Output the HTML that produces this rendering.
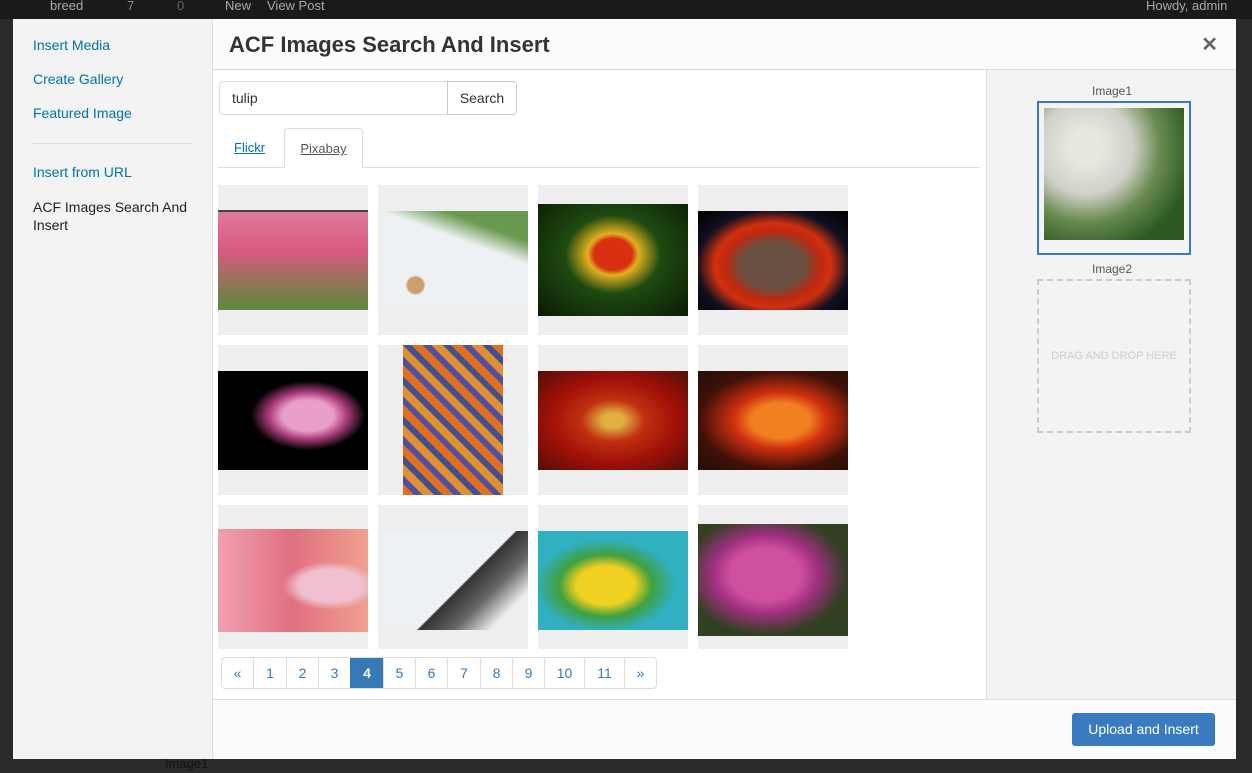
<!DOCTYPE html><html><head><style>
*{box-sizing:border-box;margin:0;padding:0}
body{width:1252px;height:773px;background:#2b2b2b;font-family:"Liberation Sans",sans-serif;position:relative;overflow:hidden}
.bar{position:absolute;left:0;top:0;width:1252px;height:19px;background:#1a1a1a;color:#888;font-size:13px}
.bar span{position:absolute;top:-2px}
.modal{position:absolute;left:13px;top:19px;width:1223px;height:740px;background:#fff}
.side{position:absolute;left:0;top:0;width:200px;height:740px;background:#f3f3f3;border-right:1px solid #ddd}
.side a{position:absolute;left:20px;color:#0073aa;font-size:14px;text-decoration:none}
.hdr{position:absolute;left:200px;top:0;right:0;height:51px;border-bottom:1px solid #ddd;background:#fcfcfc}
.hdr h1{position:absolute;left:16px;top:13px;font-size:22px;color:#333;font-weight:bold}
.right{position:absolute;left:973px;top:51px;right:0;height:629px;background:#f3f3f3;border-left:1px solid #ddd}
.foot{position:absolute;left:200px;top:680px;right:0;height:60px;background:#fcfcfc;border-top:1px solid #ddd}
.cell{position:absolute;width:150px;background:#eee}
.im{position:absolute}
.pg{position:absolute;left:221px;top:657px;height:32px;border:1px solid #ddd;border-radius:4px;display:flex;background:#fff}
.pg div{height:30px;line-height:30px;text-align:center;color:#337ab7;font-size:14px;border-left:1px solid #ddd}
.pg div:first-child{border-left:none}
</style></head><body>
<div class="bar"><span style="left:50px;color:#aaa">breed</span><span style="left:127px">7</span><span style="left:177px;color:#666">0</span><span style="left:225px;color:#aaa">New</span><span style="left:267px;color:#aaa">View Post</span><span style="left:1146px;color:#aaa">Howdy, admin</span></div>
<div style="position:absolute;left:165px;top:756px;color:#111;font-size:13px">Image1</div>
<div class="modal">
<div class="side">
<a style="top:18px">Insert Media</a><a style="top:52px">Create Gallery</a><a style="top:86px">Featured Image</a>
<div style="position:absolute;left:20px;top:124px;width:159px;height:1px;background:#ddd"></div>
<a style="top:145px">Insert from URL</a>
<a style="top:179px;color:#222;line-height:18px;width:170px">ACF Images Search And Insert</a>
</div>
<div class="hdr"><h1>ACF Images Search And Insert</h1><div style="position:absolute;right:18px;top:13px;font-size:20px;color:#666;font-weight:bold">✕</div></div>
<div style="position:absolute;left:206px;top:62px;width:229px;height:34px;border:1px solid #ddd;border-radius:4px 0 0 4px;padding:8px 12px;font-size:14px;color:#333;background:#fff">tulip</div>
<div style="position:absolute;left:434px;top:62px;width:70px;height:34px;border:1px solid #ccc;border-radius:0 4px 4px 0;text-align:center;line-height:32px;font-size:14px;color:#333;background:#fff">Search</div>
<div style="position:absolute;left:205px;top:148px;width:762px;height:1px;background:#ddd"></div>
<div style="position:absolute;left:221px;top:121px;font-size:13px;color:#0073aa;text-decoration:underline">Flickr</div>
<div style="position:absolute;left:271px;top:109px;width:79px;height:40px;border:1px solid #ddd;border-bottom:none;border-radius:4px 4px 0 0;background:#fff;text-align:center;padding-top:12px;font-size:13px;color:#555;text-decoration:underline">Pixabay</div>

<div class="cell" style="left:205px;top:166px;height:150px"><div class="im" style="top:25px;width:150px;height:100px;background:linear-gradient(#444 0 2px,#e07a9a 2px,#d85a80 40%,#5a8a3a 100%)"></div></div>
<div class="cell" style="left:365px;top:166px;height:150px"><div class="im" style="top:26px;width:150px;height:99px;background:radial-gradient(circle at 25% 75%,#caa070 0 8px,transparent 10px),linear-gradient(200deg,#6a9a50 0 20%,#eef1f3 35%)"></div></div>
<div class="cell" style="left:525px;top:166px;height:150px"><div class="im" style="top:19px;width:150px;height:112px;background:radial-gradient(ellipse at 50% 45%,#d83010 0 18%,#e0b020 24%,#1e4a10 45%,#0a1a05)"></div></div>
<div class="cell" style="left:685px;top:166px;height:150px"><div class="im" style="top:26px;width:150px;height:99px;background:radial-gradient(ellipse at 50% 55%,#6a5040 0 30%,#c02810 45%,#d03010 55%,#101020 72%,#000)"></div></div>

<div class="cell" style="left:205px;top:326px;height:150px"><div class="im" style="top:26px;width:150px;height:99px;background:radial-gradient(ellipse at 60% 45%,#e8a0c8 0 20%,#b04080 30%,#000 45%)"></div></div>
<div class="cell" style="left:365px;top:326px;height:150px"><div class="im" style="left:25px;width:100px;height:150px;background:repeating-linear-gradient(45deg,#e07020 0 8px,#5050a0 8px 14px,#e09030 14px 22px,#405090 22px 28px)"></div></div>
<div class="cell" style="left:525px;top:326px;height:150px"><div class="im" style="top:26px;width:150px;height:99px;background:radial-gradient(ellipse at 50% 50%,#e0b040 0 10%,#c03010 30%,#a01008 60%,#501008)"></div></div>
<div class="cell" style="left:685px;top:326px;height:150px"><div class="im" style="top:26px;width:150px;height:99px;background:radial-gradient(ellipse at 55% 50%,#f08020 0 25%,#d03010 40%,#401008 70%,#201008)"></div></div>

<div class="cell" style="left:205px;top:486px;height:144px"><div class="im" style="top:24px;width:150px;height:103px;background:radial-gradient(ellipse at 75% 55%,#f0c0d0 0 20%,transparent 30%),linear-gradient(90deg,#f0a0b0,#e07080 50%,#f0a090)"></div></div>
<div class="cell" style="left:365px;top:486px;height:144px"><div class="im" style="top:26px;width:150px;height:99px;background:linear-gradient(135deg,#eef1f3 0 55%,#333 56%,#666 70%,#eee 85%)"></div></div>
<div class="cell" style="left:525px;top:486px;height:144px"><div class="im" style="top:26px;width:150px;height:99px;background:radial-gradient(ellipse at 45% 55%,#f0d020 0 25%,#40a040 40%,#30b0c0 60%)"></div></div>
<div class="cell" style="left:685px;top:486px;height:144px"><div class="im" style="top:19px;width:150px;height:112px;background:radial-gradient(ellipse at 45% 45%,#d050a0 0 30%,#a03080 45%,#304020 70%)"></div></div>

<div class="right">
<div style="position:absolute;left:0;width:250px;top:14px;text-align:center;font-size:12px;color:#555">Image1</div>
<div style="position:absolute;left:50px;top:31px;width:154px;height:154px;border:2px solid #3a7bbf;padding:5px"><div style="width:140px;height:132px;background:radial-gradient(circle at 30% 30%,#e8e8e0 0 12%,#cfd0c8 35%,#6a8a50 55%,#2a5a20 80%)"></div></div>
<div style="position:absolute;left:0;width:250px;top:192px;text-align:center;font-size:12px;color:#555">Image2</div>
<div style="position:absolute;left:50px;top:209px;width:154px;height:154px;border:2px dashed #ccc;text-align:center;line-height:150px;font-size:11px;color:#ccc">DRAG AND DROP HERE</div>
</div>

<div class="foot"><div style="position:absolute;right:21px;top:13px;width:143px;height:33px;background:#3a7bbf;border-radius:3px;color:#fff;font-size:14px;text-align:center;line-height:33px">Upload and Insert</div></div>
</div>
<div class="pg">
<div style="width:31px">«</div><div style="width:33px">1</div><div style="width:32px">2</div><div style="width:32px">3</div><div style="width:33px;background:#337ab7;color:#fff;font-weight:bold;border-color:#337ab7">4</div><div style="width:32px">5</div><div style="width:32px">6</div><div style="width:33px">7</div><div style="width:32px">8</div><div style="width:32px">9</div><div style="width:40px">10</div><div style="width:40px">11</div><div style="width:32px">»</div>
</div>
</body></html>
